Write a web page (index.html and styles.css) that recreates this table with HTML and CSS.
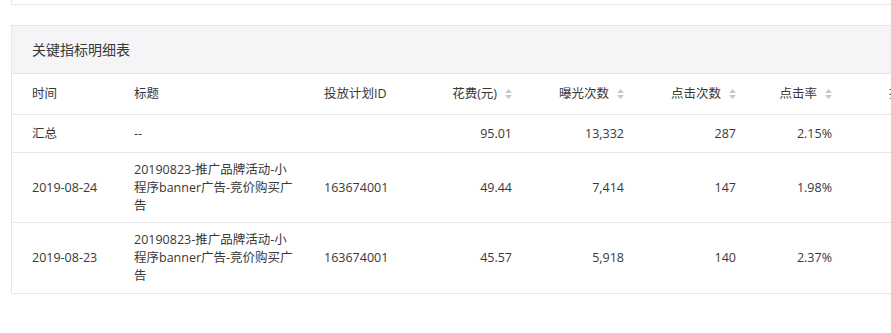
FILE: index.html
```html
<!DOCTYPE html>
<html lang="zh">
<head>
<meta charset="utf-8">
<title>关键指标明细表</title>
<link rel="stylesheet" href="styles.css">
</head>
<body>
<div class="page">
  <div class="top-card"></div>
  <div class="card">
    <div class="card-head">关键指标明细表</div>
    <div class="row head">
      <div class="cell">时间</div>
      <div class="cell">标题</div>
      <div class="cell">投放计划ID</div>
      <div class="cell num">花费(元)<svg class="sort" viewBox="0 0 7 10"><path d="M3.5 0L7 4H0z M0 6H7L3.5 10z"/></svg></div>
      <div class="cell num">曝光次数<svg class="sort" viewBox="0 0 7 10"><path d="M3.5 0L7 4H0z M0 6H7L3.5 10z"/></svg></div>
      <div class="cell num">点击次数<svg class="sort" viewBox="0 0 7 10"><path d="M3.5 0L7 4H0z M0 6H7L3.5 10z"/></svg></div>
      <div class="cell num">点击率<svg class="sort" viewBox="0 0 7 10"><path d="M3.5 0L7 4H0z M0 6H7L3.5 10z"/></svg></div>
      <div class="cell num">投放次数<svg class="sort" viewBox="0 0 7 10"><path d="M3.5 0L7 4H0z M0 6H7L3.5 10z"/></svg></div>
    </div>
    <div class="row sum">
      <div class="cell">汇总</div>
      <div class="cell">--</div>
      <div class="cell"></div>
      <div class="cell num">95.01</div>
      <div class="cell num">13,332</div>
      <div class="cell num">287</div>
      <div class="cell num">2.15%</div>
      <div class="cell num"></div>
    </div>
    <div class="row data">
      <div class="cell">2019-08-24</div>
      <div class="cell"><div class="title">20190823-推广品牌活动-小程序banner广告-竞价购买广告</div></div>
      <div class="cell">163674001</div>
      <div class="cell num">49.44</div>
      <div class="cell num">7,414</div>
      <div class="cell num">147</div>
      <div class="cell num">1.98%</div>
      <div class="cell num"></div>
    </div>
    <div class="row data last">
      <div class="cell">2019-08-23</div>
      <div class="cell"><div class="title">20190823-推广品牌活动-小程序banner广告-竞价购买广告</div></div>
      <div class="cell">163674001</div>
      <div class="cell num">45.57</div>
      <div class="cell num">5,918</div>
      <div class="cell num">140</div>
      <div class="cell num">2.37%</div>
      <div class="cell num"></div>
    </div>
  </div>
</div>
</body>
</html>
```

FILE: styles.css
```css
html, body {
  margin: 0;
  padding: 0;
  background: #ffffff;
  overflow: hidden;
}
body {
  font-family: "Open Sans", "Noto Sans CJK SC", sans-serif;
  font-size: 12.5px;
  color: #383838;
}
.page {
  width: 1200px;
  padding-left: 11px;
}
.top-card {
  height: 4px;
  border: 1px solid #e6e6e8;
  border-top: none;
  margin-bottom: 20px;
}
.card {
  border: 1px solid #e6e6e8;
  border-right: none;
}
.card-head {
  height: 47px;
  line-height: 47px;
  padding-left: 20px;
  background: #f5f5f7;
  border-bottom: 1px solid #e6e6e8;
  font-size: 14px;
  color: #383838;
}
.row {
  display: grid;
  grid-template-columns: 102px 190px 116px 112px 112px 112px 96px 122px;
  border-bottom: 1px solid #e6e6e8;
  align-items: center;
  line-height: 18px;
}
.row.head { height: 40px; }
.row.sum { height: 37px; }
.row.data { height: 69px; }
.row.last { height: 70px; border-bottom: none; }
.cell {
  padding-left: 20px;
  white-space: nowrap;
}
.cell.num {
  padding-left: 0;
  padding-right: 20px;
  text-align: right;
  display: flex;
  justify-content: flex-end;
  align-items: center;
}
.title {
  width: 162px;
  white-space: normal;
}
.sort {
  width: 7px;
  height: 10px;
  margin-left: 8px;
  fill: #c6c6c6;
}
```
